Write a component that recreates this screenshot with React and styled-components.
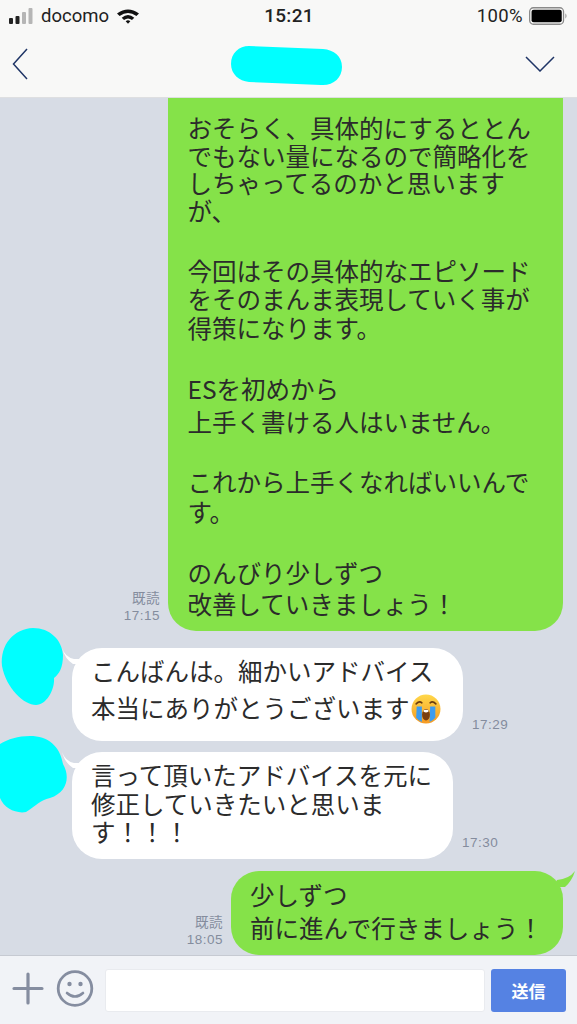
import styled, { createGlobalStyle } from 'styled-components';

const GlobalStyle = createGlobalStyle`
  html, body {
    margin: 0;
    padding: 0;
    background: #d7dce5;
  }
  * {
    box-sizing: border-box;
  }
`;

const FONT = `"Noto Sans CJK JP", "Noto Sans", sans-serif`;

const Phone = styled.div`
  width: 577px;
  height: 1024px;
  display: flex;
  flex-direction: column;
  overflow: hidden;
  font-family: ${FONT};
  color: #2b2b2b;
  background: #d7dce5;
`;

const Top = styled.div`
  height: 98px;
  flex-shrink: 0;
  background: #f8f8f7;
  border-bottom: 1px solid #dedfe1;
`;

const StatusBar = styled.div`
  height: 31px;
  padding: 0 8px 0 9px;
  display: grid;
  grid-template-columns: 1fr auto 1fr;
  align-items: center;
  font-family: "Roboto", "Liberation Sans", sans-serif;
  font-size: 18.500px;
  color: #222;
`;

const StatusSide = styled.div`
  display: flex;
  align-items: center;
  gap: ${({ $end }) => ($end ? 5 : 8)}px;
  justify-content: ${({ $end }) => ($end ? 'flex-end' : 'flex-start')};
`;

const StatusLabel = styled.span`
  letter-spacing: ${({ $end }) => ($end ? 0.400 : 0)}px;
`;

const Clock = styled.div`
  font-weight: 500;
  font-size: 19px;
  letter-spacing: 0.300px;
`;

const NavBar = styled.div`
  height: 66px;
  padding: 0 22px 0 12px;
  display: flex;
  align-items: center;
  justify-content: space-between;
`;

const NameBlob = styled.svg`
  width: 112px;
  height: 40px;
  margin: 3px 0 0 20px;
`;

const Chat = styled.div`
  flex: 1;
  min-height: 0;
  display: flex;
  flex-direction: column;
  padding-right: 14px;
`;

const RightRow = styled.div`
  display: flex;
  justify-content: flex-end;
  align-items: flex-end;
  gap: 8px;
  margin-top: ${({ $top }) => $top || 0}px;
`;

const LeftRow = styled.div`
  display: flex;
  align-items: flex-start;
  margin-top: ${({ $top }) => $top || 0}px;
`;

const Meta = styled.div`
  font-family: "Liberation Sans", "Noto Sans CJK JP", sans-serif;
  font-size: 13.500px;
  letter-spacing: 0.500px;
  line-height: 17px;
  color: #848c9d;
  text-align: right;
  padding-bottom: ${({ $bottom }) => $bottom || 0}px;
  margin-left: ${({ $left }) => $left || 0}px;
  align-self: flex-end;
`;

const Green = styled.div`
  position: relative;
  background: #85e249;
  padding: ${({ $pad }) => $pad};
  width: ${({ $w }) => $w}px;
  height: ${({ $h }) => $h}px;
  border-radius: ${({ $radius }) => $radius};
  font-size: 24.500px;
`;

const Para = styled.div`
  line-height: ${({ $lh }) => $lh}px;
  margin-top: ${({ $gap }) => $gap || 0}px;
  white-space: nowrap;
`;

const Avatar = styled.svg`
  width: 72px;
  height: 80px;
  flex-shrink: 0;
`;

const White = styled.div`
  position: relative;
  background: #fff;
  border-radius: 30px;
  font-size: 24.500px;
  color: #2b2b2b;
  white-space: nowrap;
  width: ${({ $w }) => $w}px;
  height: ${({ $h }) => $h}px;
  margin-top: ${({ $top }) => $top}px;
  padding: ${({ $pad }) => $pad};
  line-height: ${({ $lh }) => $lh}px;
`;

const Tail = styled.svg`
  position: absolute;
  top: ${({ $top }) => $top}px;
  ${({ $right }) => ($right ? 'right: -12px;' : 'left: -10px;')}
  width: 22px;
  height: 20px;
`;

const InlineEmoji = styled.svg`
  width: 30px;
  height: 30px;
  vertical-align: -6px;
  margin-left: 1px;
`;

const InputBar = styled.div`
  height: 69px;
  flex-shrink: 0;
  background: #f1f3f7;
  border-top: 1px solid #c6cad2;
  padding: 13px 11px 0 12px;
  display: flex;
  align-items: flex-start;
`;

const IconBtn = styled.svg`
  width: ${({ $w }) => $w}px;
  height: 40px;
  flex-shrink: 0;
  margin-left: ${({ $left }) => $left || 0}px;
`;

const TextBox = styled.div`
  flex: 1;
  height: 43px;
  margin: 0 6px 0 11px;
  background: #fff;
  border: 1px solid #e9ebef;
  border-radius: 3px;
`;

const SendButton = styled.div`
  width: 75px;
  height: 43px;
  background: #5582e3;
  border-radius: 3px;
  color: #fff;
  font-size: 17px;
  font-weight: 700;
  display: flex;
  align-items: center;
  justify-content: center;
`;

const Blob = ({ d }) => (
  <Avatar viewBox="0 0 72 80">
    <path d={d} fill="#00ffff" />
  </Avatar>
);

const CryingFace = () => (
  <InlineEmoji viewBox="0 0 29 29">
    <defs>
      <linearGradient id="face" x1="0" y1="0" x2="0" y2="1">
        <stop offset="0" stopColor="#ffd84a" />
        <stop offset="1" stopColor="#f59a23" />
      </linearGradient>
    </defs>
    <circle cx="14.500" cy="14.500" r="14" fill="url(#face)" />
    <path d="M5 9.500 Q8 6.500 10.500 8.500 M18.500 8.500 Q21 6.500 24 9.500" stroke="#6b3d0f" strokeWidth="1.600" fill="none" strokeLinecap="round" />
    <path d="M5.500 12h5v15q-3-1-5.500-4z M18.500 12h5v11q-2.500 3-5.500 4z" fill="#3c9cf0" />
    <ellipse cx="14.500" cy="20" rx="3.800" ry="5.500" fill="#7a3f10" />
    <ellipse cx="14.500" cy="16.500" rx="2.600" ry="1.300" fill="#fff" />
  </InlineEmoji>
);

const WHITE_TAIL = 'M0 0 Q3 9 12 11 L20 11 L20 16 L11 16 Q3 11 0 0z';

export default function App() {
  return (
    <>
      <GlobalStyle />
      <Phone>
        <Top>
          <StatusBar>
            <StatusSide>
              <svg width="24" height="16" viewBox="0 0 24 16">
                <rect x="0" y="10" width="4" height="6" rx="1" fill="#222" />
                <rect x="6.500" y="8" width="4" height="8" rx="1" fill="#222" />
                <rect x="13" y="4" width="4" height="12" rx="1" fill="#b5b5b5" />
                <rect x="19.500" y="0" width="4" height="16" rx="1" fill="#b5b5b5" />
              </svg>
              <StatusLabel>docomo</StatusLabel>
              <svg width="22" height="16" viewBox="0 0 21 15">
                <path d="M0 5 Q10.500 -2.500 21 5 L18.500 7.600 Q10.500 1.500 2.500 7.600z" fill="#111" />
                <path d="M4.500 9.200 Q10.500 4 16.500 9.200 L14.300 11.400 Q10.500 8.300 6.700 11.400z" fill="#111" />
                <path d="M8.300 12.400 Q10.500 10.800 12.700 12.400 L10.500 14.800z" fill="#111" />
              </svg>
            </StatusSide>
            <Clock>15:21</Clock>
            <StatusSide $end>
              <StatusLabel $end>100%</StatusLabel>
              <svg width="41" height="18" viewBox="0 0 37 17">
                <rect x="0.700" y="0.700" width="32" height="15.600" rx="3.500" fill="none" stroke="#8a8a8a" strokeWidth="1.200" />
                <rect x="2.500" y="2.500" width="28.500" height="12" rx="2" fill="#000" />
                <path d="M34.500 6 Q36.500 8.500 34.500 11z" fill="#8a8a8a" />
              </svg>
            </StatusSide>
          </StatusBar>
          <NavBar>
            <svg width="16" height="32" viewBox="0 0 16 32">
              <path d="M15 1 L1.500 16 L15 31" fill="none" stroke="#1f3566" strokeWidth="1.500" />
            </svg>
            <NameBlob viewBox="0 0 112 40">
              <path d="M18 0 L92 3 C103 4 111 10 111 21 C111 32 102 40 90 39 L18 36 C8 35 0 28 0 18 C0 7 8 0 18 0z" fill="#00ffff" />
            </NameBlob>
            <svg width="30" height="16" viewBox="0 0 30 16">
              <path d="M1 1 L15 15 L29 1" fill="none" stroke="#1f3566" strokeWidth="1.500" />
            </svg>
          </NavBar>
        </Top>
        <Chat>
          <RightRow>
            <Meta $bottom={7}>
              既読
              <br />
              17:15
            </Meta>
            <Green
              $w={395}
              $h={533}
              $pad="16px 0 0 19.500px"
              $radius="0 0 28px 28px"
            >
              <Para $lh={27.700}>
                おそらく、具体的にするととん
                <br />
                でもない量になるので簡略化を
                <br />
                しちゃってるのかと思います
                <br />
                が、
              </Para>
              <Para $lh={28.500} $gap={32}>
                今回はその具体的なエピソード
                <br />
                をそのまんま表現していく事が
                <br />
                得策になります。
              </Para>
              <Para $lh={33} $gap={30}>
                ESを初めから
                <br />
                上手く書ける人はいません。
              </Para>
              <Para $lh={30} $gap={29}>
                これから上手くなればいいんで
                <br />
                す。
              </Para>
              <Para $lh={31} $gap={30}>
                のんびり少しずつ
                <br />
                改善していきましょう！
              </Para>
            </Green>
          </RightRow>

          <LeftRow $top={-3}>
            <Blob d="M33 0 C50 0 62 12 63 27 C63 40 59 46 54 50 C55 62 46 77 36 77 C24 77 6 60 2 38 C0 16 14 1 33 0z" />
            <White $w={391} $h={93} $top={20} $pad="4px 0 0 19px" $lh={37}>
              <Tail viewBox="0 0 22 20" $top={0}>
                <path d={WHITE_TAIL} fill="#fff" />
              </Tail>
              こんばんは。細かいアドバイス
              <br />
              本当にありがとうございます
              <CryingFace />
            </White>
            <Meta $left={9} $bottom={8}>17:29</Meta>
          </LeftRow>

          <LeftRow $top={-5}>
            <Blob d="M30 0 C48 0 60 10 63 28 C70 40 68 56 50 62 C40 64 36 70 26 76 C16 78 4 72 0 62 L0 8 C8 3 18 0 30 0z" />
            <White $w={381} $h={107} $top={16} $pad="9px 0 0 19px" $lh={28.500}>
              <Tail viewBox="0 0 22 20" $top={0}>
                <path d={WHITE_TAIL} fill="#fff" />
              </Tail>
              言って頂いたアドバイスを元に
              <br />
              修正していきたいと思いま
              <br />
              す！！！
            </White>
            <Meta $left={9} $bottom={8}>17:30</Meta>
          </LeftRow>

          <RightRow $top={12}>
            <Meta $bottom={7}>
              既読
              <br />
              18:05
            </Meta>
            <Green
              $w={332}
              $h={84}
              $pad="7px 0 0 19px"
              $radius="28px"
            >
              <Tail viewBox="0 0 22 20" $top={0} $right>
                <path d="M22 0 Q16 8 4 9 L0 16 L12 16 Q19 10 22 0z" fill="#85e249" />
              </Tail>
              <Para $lh={33}>
                少しずつ
                <br />
                前に進んで行きましょう！
              </Para>
            </Green>
          </RightRow>
        </Chat>
        <InputBar>
          <IconBtn $w={32} viewBox="0 0 32 40">
            <path d="M16 5 V34 M2 19.500 H30" stroke="#858da0" strokeWidth="3.200" strokeLinecap="round" />
          </IconBtn>
          <IconBtn $w={38} $left={12} viewBox="0 0 38 40">
            <circle cx="19" cy="19.500" r="16.800" fill="none" stroke="#858da0" strokeWidth="2.800" />
            <circle cx="13.500" cy="15" r="2.200" fill="#858da0" />
            <circle cx="24.500" cy="15" r="2.200" fill="#858da0" />
            <path d="M11 24 Q19 31 27 24" fill="none" stroke="#858da0" strokeWidth="2.600" strokeLinecap="round" />
          </IconBtn>
          <TextBox />
          <SendButton>送信</SendButton>
        </InputBar>
      </Phone>
    </>
  );
}
